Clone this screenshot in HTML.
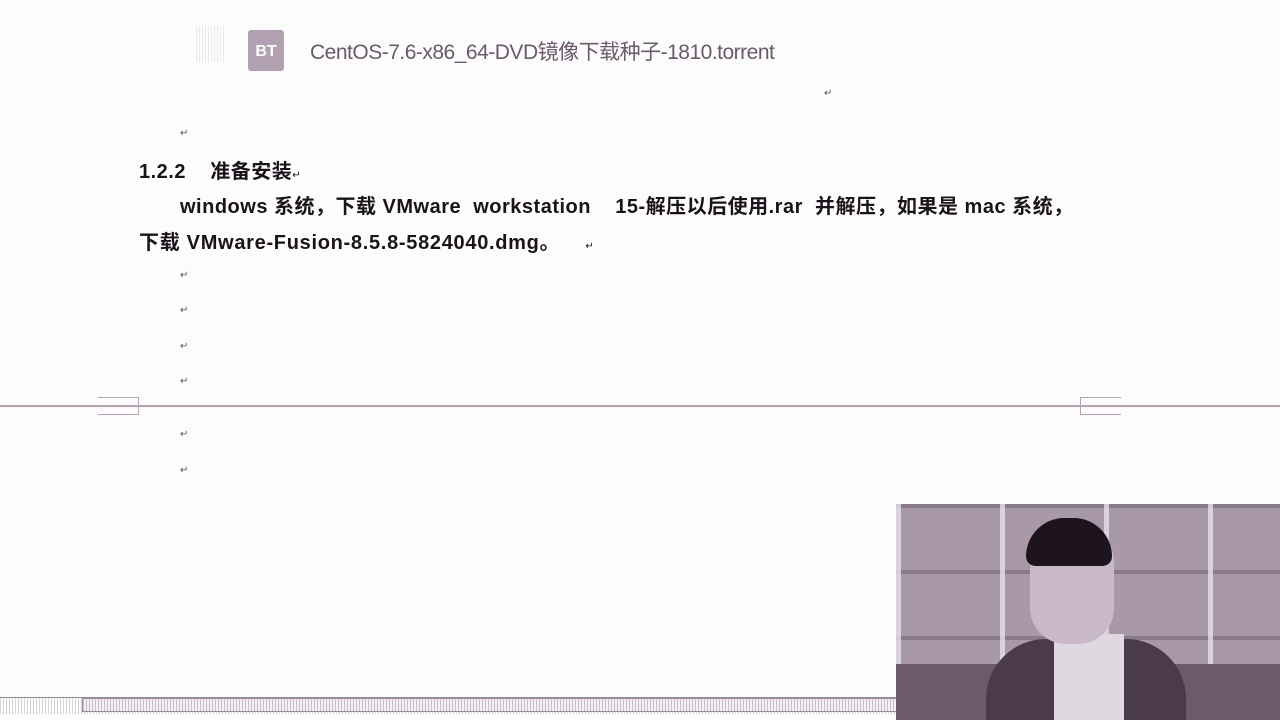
<!DOCTYPE html>
<html style="overflow:hidden"><head><meta charset="utf-8"><style>
body{margin:0;width:1280px;height:720px;background:#fdfcfd;position:relative;overflow:hidden;font-family:"Liberation Sans","Noto Sans CJK SC",sans-serif;color:#1a141a}
.a{position:absolute}
.t{position:absolute;font-size:20px;font-weight:bold;white-space:pre;letter-spacing:0.5px}
.r{position:absolute;font-size:10px;color:#555}
</style></head><body>
<div class="a" style="left:196px;top:26px;width:30px;height:36px;background:repeating-linear-gradient(90deg,#ddd 0 1px,transparent 1px 3px);opacity:.6"></div>
<div class="a" style="left:248px;top:30px;width:36px;height:41px;background:#b0a0b0;border-radius:3px;color:#fff;font-size:16px;font-weight:bold;text-align:center;line-height:44px">BT</div>
<div class="a" style="left:310px;top:36px;font-size:21px;color:#6a5a6a;letter-spacing:-0.5px">CentOS-7.6-x86_64-DVD镜像下载种子-1810.torrent</div>
<div class="r" style="left:824px;top:88px">↵</div>
<div class="r" style="left:180px;top:128px">↵</div>
<div class="t" style="left:139px;top:155px">1.2.2    准备安装<span style="font-size:10px;font-weight:normal">↵</span></div>
<div class="t" style="left:180px;top:190px">windows 系统，下载 VMware  workstation    15-解压以后使用.rar  并解压，如果是 mac 系统，</div>
<div class="t" style="left:139px;top:226px;letter-spacing:0.7px">下载 VMware-Fusion-8.5.8-5824040.dmg。    <span style="font-size:10px;font-weight:normal">↵</span></div>
<div class="r" style="left:180px;top:270px">↵</div>
<div class="r" style="left:180px;top:305px">↵</div>
<div class="r" style="left:180px;top:341px">↵</div>
<div class="r" style="left:180px;top:376px">↵</div>
<div class="r" style="left:180px;top:429px">↵</div>
<div class="r" style="left:180px;top:465px">↵</div>
<div class="a" style="left:0;top:405px;width:1280px;height:2px;background:#b4a4b4"></div>
<div class="a" style="left:98px;top:397px;width:40px;height:16px;border:1px solid #b4a4b4;border-left:none"></div>
<div class="a" style="left:1080px;top:397px;width:40px;height:16px;border:1px solid #b4a4b4;border-right:none"></div>
<div class="a" style="left:0;top:697px;width:898px;height:16px;background:repeating-linear-gradient(90deg,#d8d0d8 0 1px,#fdfcfd 1px 3px);border-top:1px solid #9a8a9a"></div>
<div class="a" style="left:82px;top:698px;width:814px;height:12px;border:1px solid #9a8a9a;background:repeating-linear-gradient(90deg,#c8bcc8 0 1px,#f4f0f4 1px 3px)"></div>
<div class="a" style="left:896px;top:504px;width:384px;height:216px;background:#a898a8;overflow:hidden">
<div class="a" style="left:0;top:0;width:384px;height:216px;background:repeating-linear-gradient(180deg,#8a7a8a 0 4px,transparent 4px 66px)"></div>
<div class="a" style="left:0;top:0;width:384px;height:216px;background:repeating-linear-gradient(90deg,#e8e0e8 0 5px,transparent 5px 104px);opacity:.8"></div>
<div class="a" style="left:0;top:160px;width:384px;height:56px;background:#6a5a6a"></div>
<div class="a" style="left:90px;top:135px;width:200px;height:81px;background:#4a3a4a;border-radius:60px 60px 0 0"></div>
<div class="a" style="left:158px;top:130px;width:70px;height:86px;background:#e0d8e0"></div>
<div class="a" style="left:134px;top:18px;width:84px;height:122px;background:#c8b8c8;border-radius:40px 40px 36px 36px"></div>
<div class="a" style="left:130px;top:14px;width:86px;height:48px;background:#1e141e;border-radius:40px 40px 10px 10px"></div>
</div>
</body></html>
